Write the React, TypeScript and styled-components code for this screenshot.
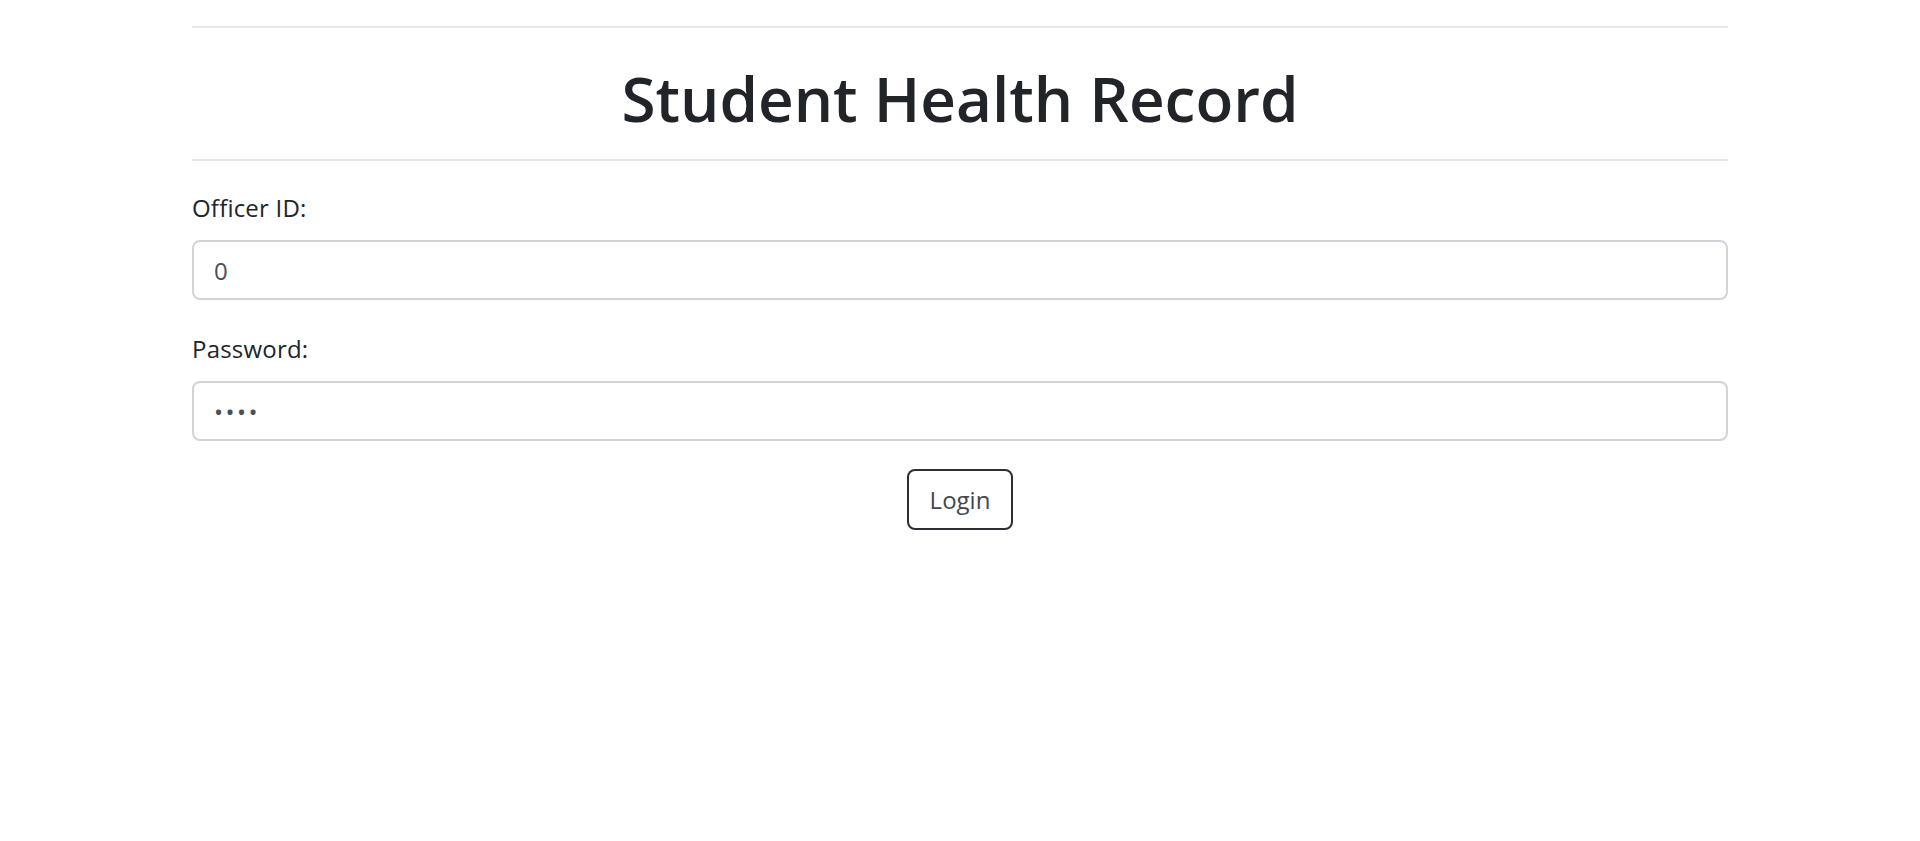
import React from "react";
import styled, { createGlobalStyle } from "styled-components";

const GlobalStyle = createGlobalStyle`
  html, body {
    margin: 0;
    padding: 0;
    background: #ffffff;
  }
  body {
    font-family: "Open Sans", "Noto Sans", "Liberation Sans", sans-serif;
    color: #212529;
    font-size: 24px;
    line-height: 1.5;
  }
  * { box-sizing: border-box; }
`;

const Container = styled.main`
  width: 80%;
  margin: 0 auto;
  padding-top: 26px;
  display: flex;
  flex-direction: column;
`;

const Rule = styled.hr`
  margin: 0;
  border: 0;
  height: 2px;
  background: #e6e7e8;
`;

const Title = styled.h1`
  margin: 33px 0 24px;
  font-size: 62px;
  font-weight: 600;
  line-height: 1.2;
  text-align: center;
  color: #212529;
`;

const Form = styled.form`
  display: flex;
  flex-direction: column;
`;

const Field = styled.div<{ $first?: boolean }>`
  display: flex;
  flex-direction: column;
  gap: 14px;
  margin-top: ${(p) => (p.$first ? "29px" : "31px")};
`;

const Label = styled.label`
  font-size: 24px;
  line-height: 36px;
  color: #212529;
  letter-spacing: 0.2px;
`;

const Input = styled.input<{ $masked?: boolean }>`
  width: 100%;
  height: 60px;
  padding: 0 20px;
  border: 2px solid #d0d4d9;
  border-radius: 8px;
  background: #fff;
  font-family: inherit;
  font-size: 24px;
  color: #495057;
  letter-spacing: ${(p) => (p.$masked ? "2.5px" : "0")};
  outline: none;
`;

const Actions = styled.div`
  display: flex;
  justify-content: center;
  margin-top: 28px;
`;

const Button = styled.button`
  height: 61px;
  padding: 0 21px;
  border: 2px solid #2b2f33;
  border-radius: 8px;
  background: #fff;
  font-family: inherit;
  font-size: 24px;
  line-height: 36px;
  color: #43484e;
  cursor: pointer;
`;

export default function App() {
  return (
    <>
      <GlobalStyle />
      <Container>
        <Rule />
        <Title>Student Health Record</Title>
        <Rule />
        <Form onSubmit={(e) => e.preventDefault()}>
          <Field $first>
            <Label htmlFor="officer">Officer ID:</Label>
            <Input id="officer" type="text" value="0" readOnly />
          </Field>
          <Field>
            <Label htmlFor="password">Password:</Label>
            <Input id="password" type="password" value="1234" readOnly $masked />
          </Field>
          <Actions>
            <Button type="submit">Login</Button>
          </Actions>
        </Form>
      </Container>
    </>
  );
}
